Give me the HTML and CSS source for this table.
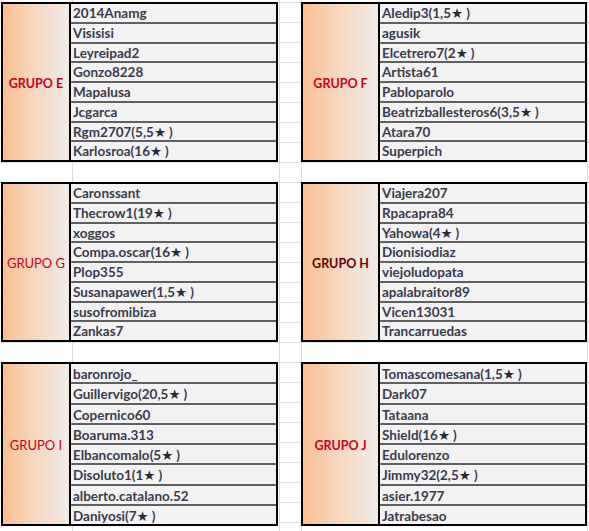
FILE: index.html
```html
<!DOCTYPE html>
<html lang="es">
<head>
<meta charset="utf-8">
<title>Grupos</title>
<link rel="stylesheet" href="styles.css">
</head>
<body>
<div class="sheet">
  <div class="group left">
    <div class="label">GRUPO E</div>
    <div class="names">
      <div class="row">2014Anamg</div>
      <div class="row">Visisisi</div>
      <div class="row">Leyreipad2</div>
      <div class="row">Gonzo8228</div>
      <div class="row">Mapalusa</div>
      <div class="row">Jcgarca</div>
      <div class="row">Rgm2707(5,5<span class="star">★</span>)</div>
      <div class="row">Karlosroa(16<span class="star">★</span>)</div>
    </div>
  </div>
  <div class="group right">
    <div class="label">GRUPO F</div>
    <div class="names">
      <div class="row">Aledip3(1,5<span class="star">★</span>)</div>
      <div class="row">agusik</div>
      <div class="row">Elcetrero7(2<span class="star">★</span>)</div>
      <div class="row">Artista61</div>
      <div class="row">Pabloparolo</div>
      <div class="row">Beatrizballesteros6(3,5<span class="star">★</span>)</div>
      <div class="row">Atara70</div>
      <div class="row">Superpich</div>
    </div>
  </div>
  <div class="group left">
    <div class="label thin">GRUPO G</div>
    <div class="names">
      <div class="row">Caronssant</div>
      <div class="row">Thecrow1(19<span class="star">★</span>)</div>
      <div class="row">xoggos</div>
      <div class="row">Compa.oscar(16<span class="star">★</span>)</div>
      <div class="row">Plop355</div>
      <div class="row">Susanapawer(1,5<span class="star">★</span>)</div>
      <div class="row">susofromibiza</div>
      <div class="row">Zankas7</div>
    </div>
  </div>
  <div class="group right">
    <div class="label dark">GRUPO H</div>
    <div class="names">
      <div class="row">Viajera207</div>
      <div class="row">Rpacapra84</div>
      <div class="row">Yahowa(4<span class="star">★</span>)</div>
      <div class="row">Dionisiodiaz</div>
      <div class="row">viejoludopata</div>
      <div class="row">apalabraitor89</div>
      <div class="row">Vicen13031</div>
      <div class="row">Trancarruedas</div>
    </div>
  </div>
  <div class="group left tall">
    <div class="label thin">GRUPO I</div>
    <div class="names">
      <div class="row">baronrojo_</div>
      <div class="row">Guillervigo(20,5<span class="star">★</span>)</div>
      <div class="row">Copernico60</div>
      <div class="row">Boaruma.313</div>
      <div class="row">Elbancomalo(5<span class="star">★</span>)</div>
      <div class="row">Disoluto1(1<span class="star">★</span>)</div>
      <div class="row">alberto.catalano.52</div>
      <div class="row">Daniyosi(7<span class="star">★</span>)</div>
    </div>
  </div>
  <div class="group right tall">
    <div class="label">GRUPO J</div>
    <div class="names">
      <div class="row">Tomascomesana(1,5<span class="star">★</span>)</div>
      <div class="row">Dark07</div>
      <div class="row">Tataana</div>
      <div class="row">Shield(16<span class="star">★</span>)</div>
      <div class="row">Edulorenzo</div>
      <div class="row">Jimmy32(2,5<span class="star">★</span>)</div>
      <div class="row">asier.1977</div>
      <div class="row">Jatrabesao</div>
    </div>
  </div>
</div>
</body>
</html>
```

FILE: styles.css
```css
html, body {
  margin: 0;
  padding: 0;
}

body {
  width: 589px;
  height: 531px;
  overflow: hidden;
  background-color: #fff;
  background-image:
    linear-gradient(to right,
      transparent 0 72px, #dcdcdc 72px 73px,
      transparent 73px 279px, #dcdcdc 279px 280px,
      transparent 280px 301px, #dcdcdc 301px 302px,
      transparent 302px 587px, #dcdcdc 587px 588px,
      transparent 588px),
    repeating-linear-gradient(to bottom,
      #e0e0e0 0 1px, transparent 1px 20px);
  background-position: 0 0, 0 2px;
  font-family: Lato, "Liberation Sans", sans-serif;
}

.sheet {
  display: grid;
  grid-template-columns: 277px 286px;
  column-gap: 23px;
  row-gap: 20px;
  padding: 2px 0 0 1px;
}

.group {
  display: grid;
  grid-template-columns: var(--label-w) 1fr;
  border: 2px solid #000;
  background: #f2f2f2;
  --row-h: 17.75px;
}

.group.left { --label-w: 68px; }
.group.right { --label-w: 77px; }
.group.tall { --row-h: 18.25px; }

.label {
  display: flex;
  align-items: center;
  justify-content: center;
  border-right: 2px solid #000;
  background: linear-gradient(to right, #f9bf92 0%, #f5d6be 45%, #f0ebe7 100%);
  color: #c8001e;
  font-weight: 700;
  font-size: 12.5px;
  padding-top: 2px;
}

.label.thin {
  font-weight: 400;
  font-size: 13px;
}

.label.dark {
  color: #5a0a0a;
}

.names {
  display: flex;
  flex-direction: column;
}

.row {
  height: var(--row-h);
  line-height: var(--row-h);
  padding: 1px 0 0 2px;
  box-sizing: border-box;
  color: #3b3b4d;
  font-size: 13.5px;
  font-weight: 700;
  white-space: nowrap;
}

.row + .row {
  border-top: 2px solid #606060;
  height: calc(var(--row-h) + 2px);
}

.star {
  font-family: "DejaVu Sans", sans-serif;
  font-size: 13.5px;
  margin-right: 3px;
  color: #2a2a35;
}
```
